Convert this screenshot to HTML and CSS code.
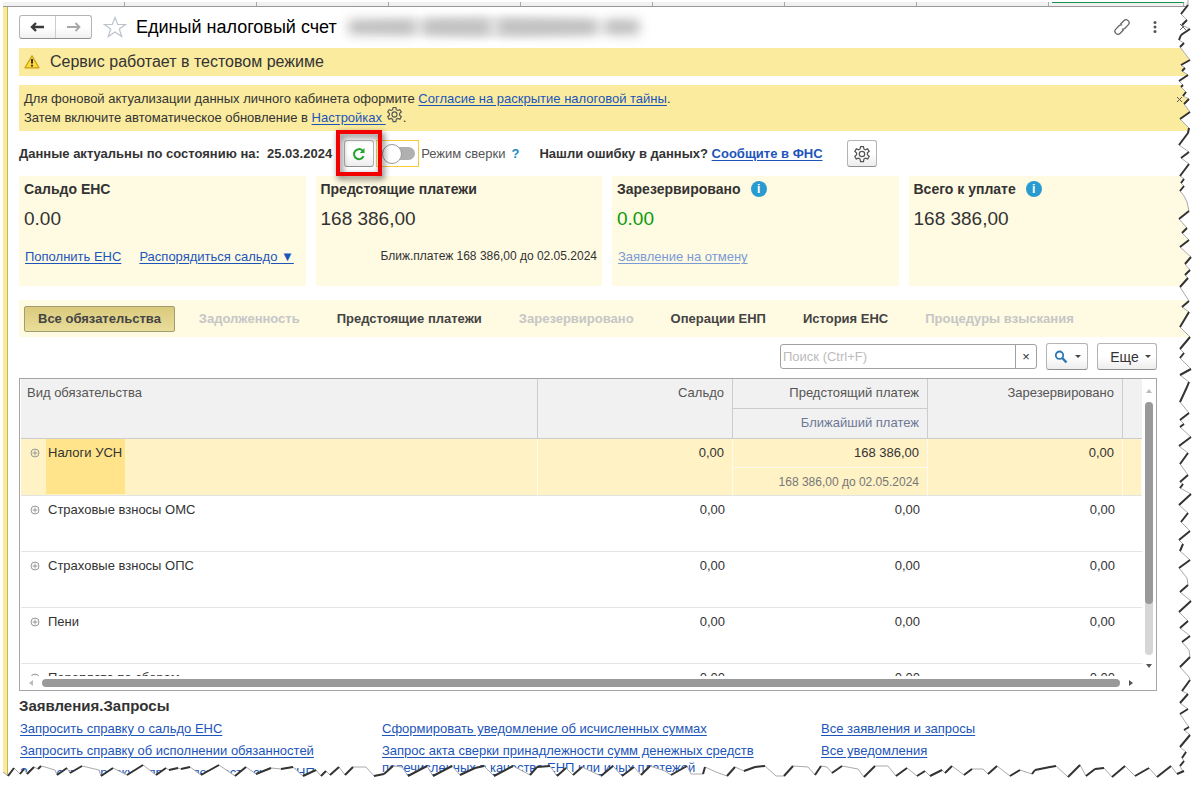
FILE: index.html
```html
<!DOCTYPE html>
<html lang="ru">
<head>
<meta charset="utf-8">
<title>Единый налоговый счет</title>
<link rel="stylesheet" href="styles.css">
</head>
<body>
<svg class="defs" aria-hidden="true">
  <symbol id="gear" viewBox="0 0 16 16"><path d="M6.700 .8h2.600l.4 2.100 1.300.7 2-.8 1.400 2.200-1.600 1.400v1.600l1.600 1.500-1.300 2.300-2.100-.7-1.300.8-.4 2.200H6.700l-.4-2.200-1.300-.8-2.100.7-1.300-2.300L3.200 8V6.500L1.600 5 3 2.800l2 .8 1.300-.7z" transform="translate(0 .6)"/><circle cx="8" cy="8" r="2.400"/></symbol>
  <symbol id="expand" viewBox="0 0 10 10"><circle cx="5" cy="5" r="4"/><path d="M2.500 5h5M5 2.500v5"/></symbol>
</svg>
<div class="frame">
  <div class="tabstrip"><i></i><i></i><i></i><i></i><i></i><i></i><i></i><i></i><i class="current"></i></div>
  <main class="page">
    <header class="title-row">
      <div class="nav">
        <button type="button" aria-label="Назад"><svg width="16" height="12" viewBox="0 0 16 12"><path d="M2 6h12M6 2L2 6l4 4" fill="none" stroke="#3a3a3a" stroke-width="2.400"/></svg></button>
        <button type="button" aria-label="Вперед"><svg width="16" height="12" viewBox="0 0 16 12"><path d="M1 6h12M9.500 2l4 4-4 4" fill="none" stroke="#a8a8a8" stroke-width="1.800"/></svg></button>
      </div>
      <svg class="star" width="24" height="22" viewBox="0 0 24 22"><path d="M12 1.500l2.700 7h7.800l-6.200 4.500 2.400 7.500L12 16l-6.700 4.500L7.700 13 1.500 8.500h7.800z" fill="#fff" stroke="#bcc2ca" stroke-width="1.200"/></svg>
      <h1>Единый налоговый счет</h1>
      <div class="redacted" aria-hidden="true"><i></i><i></i><i></i><i></i></div>
      <div class="window-tools">
        <svg width="18" height="18" viewBox="0 0 18 18" fill="none" stroke="#666" stroke-width="1.300" stroke-linecap="round"><path d="M7.800 5.800l3-3.100a3 3 0 0 1 4.400 4.200l-3.200 3.300a3 3 0 0 1-2.600.9M10.200 12.200l-3 3.100a3 3 0 0 1-4.400-4.200L6 7.800a3 3 0 0 1 2.600-.9"/></svg>
        <svg width="4" height="14" viewBox="0 0 4 14" fill="#555"><circle cx="2" cy="2.500" r="1.500"/><circle cx="2" cy="7" r="1.500"/><circle cx="2" cy="11.500" r="1.500"/></svg>
        <svg width="8" height="8" viewBox="0 0 8 8" stroke="#666"><path d="M1 1l6 6M7 1L1 7"/></svg>
      </div>
    </header>

    <div class="banner test-mode">
      <svg width="16" height="14" viewBox="0 0 16 14"><path d="M8 .8L15 12.800H1z" fill="#ffd83b" stroke="#c99d10" stroke-width="1.200" stroke-linejoin="round"/><path d="M8 4v4.500M8 9.800v1.700" stroke="#222" stroke-width="1.800"/></svg>
      <span>Сервис работает в тестовом режиме</span>
    </div>

    <div class="banner notice">
      <p>Для фоновой актуализации данных личного кабинета оформите <a href="#consent">Согласие на раскрытие налоговой тайны</a>.<br>
      Затем включите автоматическое обновление в <a href="#settings">Настройках </a><svg class="gear" width="17" height="17"><use href="#gear"/></svg>.</p>
      <svg class="close" width="8" height="8" viewBox="0 0 8 8" stroke="#555"><path d="M1 1l5 5M6 1L1 6"/></svg>
    </div>

    <div class="status">
      <b>Данные актуальны по состоянию на:&nbsp; 25.03.2024</b>
      <div class="refresh">
        <button type="button" class="btn" aria-label="Обновить"><svg width="16" height="16" viewBox="0 0 16 16"><path d="M12.600 10.200A5 5 0 1 1 11.500 4.500" fill="none" stroke="#25a22b" stroke-width="2"/><path d="M13.500 2v5H8.700z" fill="#25a22b"/></svg></button>
        <span class="marker"></span>
      </div>
      <label class="reconcile"><span class="focus"><input type="checkbox"></span>Режим сверки</label>
      <a class="help" href="#help">?</a>
      <b class="error">Нашли ошибку в данных? <a href="#fns">Сообщите в ФНС</a></b>
      <button type="button" class="btn" aria-label="Настройки"><svg class="gear" width="18" height="18"><use href="#gear"/></svg></button>
    </div>

    <section class="cards">
      <article class="card">
        <h2>Сальдо ЕНС</h2><p class="sum">0.00</p>
        <p class="actions"><a href="#pay">Пополнить ЕНС</a><a href="#manage">Распорядиться сальдо ▼</a></p>
      </article>
      <article class="card">
        <h2>Предстоящие платежи</h2><p class="sum">168 386,00</p>
        <p class="next">Ближ.платеж 168 386,00 до 02.05.2024</p>
      </article>
      <article class="card">
        <h2>Зарезервировано <span class="info">i</span></h2><p class="sum green">0.00</p>
        <p class="actions"><a class="pale" href="#cancel">Заявление на отмену</a></p>
      </article>
      <article class="card">
        <h2>Всего к уплате <span class="info">i</span></h2><p class="sum">168 386,00</p>
      </article>
    </section>

    <nav class="tabs">
      <button type="button" class="active">Все обязательства</button>
      <button type="button" disabled>Задолженность</button>
      <button type="button">Предстоящие платежи</button>
      <button type="button" disabled>Зарезервировано</button>
      <button type="button">Операции ЕНП</button>
      <button type="button">История ЕНС</button>
      <button type="button" disabled>Процедуры взыскания</button>
    </nav>

    <div class="tools">
      <div class="search"><input type="text" aria-label="Поиск" placeholder="Поиск (Ctrl+F)"><button type="button" aria-label="Очистить">×</button></div>
      <button type="button" class="btn find" aria-label="Найти"><svg width="14" height="14" viewBox="0 0 14 14" fill="none" stroke="#2b78b5"><circle cx="5.500" cy="5.200" r="3.700" stroke-width="1.800"/><path d="M8.300 8l4.200 4.500" stroke-width="2.400"/></svg><span class="caret"></span></button>
      <button type="button" class="btn more">Еще<span class="caret"></span></button>
    </div>

    <div class="grid">
      <div class="viewport">
        <table>
          <colgroup><col><col class="num"><col class="num"><col class="num"><col class="tail"></colgroup>
          <thead>
            <tr><th rowspan="2">Вид обязательства</th><th rowspan="2">Сальдо</th><th>Предстоящий платеж</th><th rowspan="2">Зарезервировано</th><th rowspan="2"></th></tr>
            <tr><th class="sub">Ближайший платеж</th></tr>
          </thead>
          <tbody>
            <tr class="selected"><td><div class="name"><svg class="plus"><use href="#expand"/></svg><span>Налоги УСН</span></div></td><td>0,00</td><td class="split"><div>168 386,00</div><div class="sub">168 386,00 до 02.05.2024</div></td><td>0,00</td><td></td></tr>
            <tr><td><div class="name"><svg class="plus"><use href="#expand"/></svg><span>Страховые взносы ОМС</span></div></td><td>0,00</td><td>0,00</td><td>0,00</td><td></td></tr>
            <tr><td><div class="name"><svg class="plus"><use href="#expand"/></svg><span>Страховые взносы ОПС</span></div></td><td>0,00</td><td>0,00</td><td>0,00</td><td></td></tr>
            <tr><td><div class="name"><svg class="plus"><use href="#expand"/></svg><span>Пени</span></div></td><td>0,00</td><td>0,00</td><td>0,00</td><td></td></tr>
            <tr><td><div class="name"><svg class="plus"><use href="#expand"/></svg><span>Переплата по сборам</span></div></td><td>0,00</td><td>0,00</td><td>0,00</td><td></td></tr>
          </tbody>
        </table>
      </div>
      <div class="vbar"><span class="arrow up"></span><div class="track"><div class="thumb"></div></div><span class="arrow down"></span></div>
      <div class="hbar"><span class="arrow left"></span><div class="thumb"></div><span class="arrow right"></span></div>
    </div>

    <section class="requests">
      <h2>Заявления.Запросы</h2>
      <div class="columns">
        <div><a href="#r1">Запросить справку о сальдо ЕНС</a><a href="#r2">Запросить справку об исполнении обязанностей</a><a href="#r3">Запросить справку о принадлежности сумм ЕНП</a></div>
        <div><a href="#r4">Сформировать уведомление об исчисленных суммах</a><a href="#r5">Запрос акта сверки принадлежности сумм денежных средств<br>перечисленных в качестве ЕНП или иных платежей</a></div>
        <div><a href="#r6">Все заявления и запросы</a><a href="#r7">Все уведомления</a></div>
      </div>
    </section>
  </main>
  <svg class="torn right-edge" id="torn-right" aria-hidden="true"></svg>
  <svg class="torn bottom-edge" id="torn-bottom" aria-hidden="true"></svg>
</div>
<script src="torn.js"></script>
</body>
</html>
```

FILE: torn.js
```js
// Torn paper edges: points run along the tear, steep backward strokes are dark.
const right = [[10,0],[10,5],[3,14],[9,20],[4,25],[12,29],[3,35],[1,40],[6,43],[2,47],[12,60],[3,65],[7,68],[4,71],[10,75],[1,81],[5,85],[3,87],[8,92],[5,96],[11,99],[6,104],[12,112],[2,119],[11,128],[10,133],[1,145],[11,152],[3,158],[11,164],[2,176],[6,179],[3,183],[6,186],[2,191],[6,196],[9,202],[11,211],[1,219],[9,228],[4,233],[11,240],[2,247],[13,257],[7,264],[12,270],[7,275],[10,278],[2,287],[11,301],[4,307],[11,312],[2,327],[12,337],[2,349],[6,353],[2,358],[13,369],[2,375],[11,382],[9,387],[2,402],[11,413],[2,420],[6,424],[2,427],[13,437],[1,446],[10,453],[2,464],[10,475],[2,482],[5,484],[2,488],[13,494],[1,505],[10,513],[3,522],[12,531],[1,540],[5,544],[2,551],[12,560],[1,568],[9,578],[10,585],[2,592],[13,601],[1,612],[10,621],[2,628],[12,636],[4,642],[11,650],[12,657],[2,667],[11,677],[12,680],[4,691],[10,694],[2,703],[10,709],[2,714],[8,723],[11,727],[6,730],[12,735],[2,747],[8,752],[4,758],[6,761],[2,766],[6,774]];
const bottom = [[3,8],[8,12],[14,4],[20,10],[24,5],[27,10],[34,3],[38,5],[41,2],[45,3],[55,6],[57,11],[67,4],[70,9],[82,2],[99,6],[101,12],[113,4],[127,11],[143,1],[156,11],[166,4],[169,6],[178,4],[181,5],[190,3],[201,11],[219,1],[235,12],[246,3],[256,10],[271,4],[281,5],[293,3],[303,12],[316,6],[321,12],[326,7],[330,11],[339,3],[345,11],[353,3],[366,3],[374,12],[384,10],[393,2],[402,3],[408,12],[427,2],[433,12],[452,2],[460,11],[475,4],[484,2],[494,12],[513,2],[530,11],[537,3],[550,2],[557,12],[566,4],[573,11],[582,3],[601,12],[613,2],[622,12],[634,3],[641,11],[650,2],[665,7],[671,11],[687,2],[691,10],[703,10],[705,3],[716,8],[727,12],[735,3],[744,7],[755,3],[765,2],[776,12],[784,12],[793,2],[808,3],[815,11],[821,2],[827,3],[832,9],[842,2],[858,5],[864,13],[875,2],[888,2],[896,12],[907,4],[917,12],[925,7],[930,12],[942,6],[945,9],[952,2],[964,11],[972,5],[983,5],[988,10],[997,2],[1010,12],[1020,6],[1032,10],[1035,6],[1050,3],[1056,2],[1068,13],[1080,1],[1086,12],[1095,5],[1104,4],[1112,13],[1125,2],[1135,12],[1149,4],[1157,13],[1171,2],[1177,10],[1184,7]];

function tear(id, pts, outside, isDark) {
  const line = 'M' + pts.map(p => p.join(' ')).join('L');
  let dark = '';
  for (let i = 1; i < pts.length; i++) {
    if (isDark(pts[i - 1], pts[i])) dark += `M${pts[i - 1].join(' ')}L${pts[i].join(' ')}`;
  }
  document.getElementById(id).innerHTML =
    `<path class="outside" d="${line}${outside}"/><path class="thin" d="${line}"/><path class="thick" d="${dark}"/>`;
}
tear('torn-right', right, 'V786H22V0Z', (a, b) => b[0] < a[0]);
tear('torn-bottom', bottom, 'H1200V22H0V8Z', (a, b) => b[1] < a[1]);
```

FILE: styles.css
```css
* { box-sizing: border-box; }
body { margin: 0; background: #fff; color: #333; font: 13px/18px "Liberation Sans", Arial, sans-serif; }
h1, h2, p { margin: 0; font-weight: normal; }
button, input { font: inherit; color: inherit; margin: 0; }
a { color: #1c55ba; text-underline-offset: 2px; }
svg { flex: none; }
.defs { position: absolute; width: 0; height: 0; }
.gear { fill: none; stroke: #555; stroke-width: 1.1; }

.frame { position: relative; min-height: 100vh; overflow: hidden; padding: 2px 0 0 3px; }
.tabstrip { display: flex; height: 5px; margin-right: 12px; background: #f1f1f1; border-bottom: 1px solid #999; }
.tabstrip i { flex: 0 1 132px; border-right: 1px solid #aaa; }
.tabstrip i:first-child { flex-basis: 122px; }
.tabstrip .current { border-top: 1px solid #12924f; margin-left: 3px; }
.page { border-left: 4px solid #fae99a; box-shadow: inset 1px 0 #c5b55d; padding: 8px 5px 0 12px; min-height: 768px; }

.title-row { display: flex; align-items: center; height: 24px; }
.nav { display: flex; width: 73px; height: 24px; border: 1px solid #b4b4b4; border-bottom-color: #8f8f8f; border-radius: 3px; background: linear-gradient(#fff 50%, #f0f0f0); }
.nav button { flex: 1; padding: 0; border: 0; background: none; display: flex; align-items: center; justify-content: center; }
.nav button + button { border-left: 1px solid #ccc; }
.star { margin: 0 9px 0 11px; }
h1 { font-size: 18px; line-height: 24px; color: #000; }
.redacted { display: flex; gap: 8px; align-items: center; width: 306px; height: 30px; margin-left: 4px; padding: 0 8px; background: radial-gradient(closest-side, #eee 50%, #fff); }
.redacted i { flex: 4; height: 14px; background: #b8b8b8; filter: blur(6px); }
.redacted i:nth-child(3) { flex: 6; }
.redacted i:nth-child(4) { flex: 2; }
.window-tools { display: flex; align-items: center; gap: 22px; margin-left: auto; padding-right: 8px; }

.banner { display: flex; background: #faeb9e; }
.test-mode { align-items: center; gap: 10px; height: 28px; margin-top: 9px; padding-left: 5px; font-size: 16px; }
.notice { justify-content: space-between; margin-top: 9px; padding: 4px 11px 4px 5px; min-height: 46px; line-height: 19px; }
.notice .gear { vertical-align: -1px; margin-top: -4px; }
.notice .close { margin-top: 7px; }

.status { display: flex; align-items: center; height: 45px; white-space: nowrap; }
.btn { display: flex; align-items: center; justify-content: center; height: 27px; width: 30px; padding: 0; border: 1px solid #b4b4b4; border-bottom-color: #8f8f8f; border-radius: 3px; background: linear-gradient(#fff 50%, #ededed); }
.refresh { position: relative; margin: 0 2px 0 12px; }
.marker { position: absolute; inset: -10px -8px -9px; border: 4px solid #f30000; filter: drop-shadow(2px 3px 3px #0009); z-index: 2; }
.reconcile { display: flex; align-items: center; gap: 2px; color: #555; }
.focus { display: flex; align-items: center; width: 43px; height: 27px; padding-left: 5px; border: 1px solid #f6cc3b; }
.focus input { appearance: none; width: 33px; height: 13px; border-radius: 7px; background: #b0b0b0; display: flex; align-items: center; }
.focus input::before { content: ""; flex: none; width: 18px; height: 18px; border: 1px solid #999; border-radius: 50%; background: #fff; }
.help { margin-left: 6px; font-weight: bold; color: #1e88c7; text-decoration: none; }
.error { margin: 0 24px 0 20px; }

.cards { display: grid; grid-template-columns: repeat(4, 1fr); gap: 10px; }
.card { min-height: 110px; padding: 4px 5px; background: #fffae2; }
.card h2 { display: flex; align-items: center; gap: 10px; font-size: 14px; line-height: 18px; font-weight: bold; }
.sum { margin-top: 9px; font-size: 19px; line-height: 24px; }
.green { color: #0b9a0b; }
.actions { display: flex; gap: 18px; margin-top: 17px; padding-left: 1px; white-space: nowrap; }
.next { margin-top: 16px; text-align: right; font-size: 12px; }
.pale { color: #7a9bd8; }
.info { width: 16px; height: 16px; border-radius: 50%; background: #2a9bd0; color: #fff; font-size: 12px; line-height: 16px; text-align: center; }

.tabs { display: flex; align-items: center; gap: 11px; height: 37px; margin-top: 14px; padding-left: 5px; background: #fffae2; white-space: nowrap; }
.tabs button { height: 26px; padding: 0 12px; border: 1px solid transparent; border-radius: 2px; background: none; font-weight: bold; color: #444; }
.tabs button:disabled { color: #c6c6c6; }
.tabs .active { padding: 0 13px; border-color: #a39b72; background: linear-gradient(#d9ca7c, #eadd9b); }

.tools { display: flex; justify-content: flex-end; align-items: center; gap: 9px; height: 41px; margin-right: 38px; padding-bottom: 2px; }
.search { display: flex; width: 257px; height: 25px; border: 1px solid #a0a0a0; border-radius: 3px; }
.search input { flex: 1; min-width: 0; padding: 0 2px; border: 0; background: none; }
.search input::placeholder { color: #bbb; }
.search button { width: 21px; padding: 0; border: 0; border-left: 1px solid #a0a0a0; background: none; }
.find { width: 42px; gap: 7px; }
.more { width: 60px; gap: 6px; padding-left: 7px; font-size: 14px; }
.caret { border: 3px solid transparent; border-top-color: #444; border-bottom: 0; }

.grid { display: grid; grid-template: 297px 14px / 1fr 14px; margin-right: 38px; border: 1px solid #a5a5a5; }
.viewport { overflow: hidden; padding-left: 1px; }
table { width: 100%; table-layout: fixed; border-collapse: separate; border-spacing: 0; }
.num { width: 195px; }
.tail { width: 19px; }
th, td { padding: 5px 8px; text-align: right; vertical-align: top; font-weight: normal; line-height: 18px; }
th { height: 30px; background: #f1f1f1; border-right: 1px solid #ccc; border-bottom: 1px solid #ccc; color: #555; }
th:first-child:not(.sub) { text-align: left; padding-left: 6px; }
th:last-child:not(.sub) { border-right: 0; }
td { height: 56px; border-bottom: 1px solid #e4e4e4; }
td:first-child { padding: 0 0 0 9px; }
.name { display: flex; height: 55px; }
.name span { padding: 5px 3px 0 2px; }
.plus { width: 10px; height: 10px; margin: 9px 6px 0 0; fill: none; stroke: #999; }
.selected td { background: #fff2c5; border-right: 1px solid #fffaf0; }
.selected .name span { background: #ffe48c; }
td.split { padding: 0; }
.split div { padding: 5px 8px; height: 28px; }
.split .sub { border-top: 1px solid #fffaf0; }
.sub { color: #6c7896; }
.split .sub { color: #777; font-size: 12px; }
.arrow { width: 0; height: 0; border: 3px solid transparent; }
.up { border-bottom: 4px solid #bbb; border-top: 0; }
.down { border-top: 4px solid #555; border-bottom: 0; }
.left { border-right: 4px solid #bbb; border-left: 0; }
.right { border-left: 4px solid #555; border-right: 0; }
.vbar { display: flex; flex-direction: column; align-items: center; gap: 9px; padding: 10px 0 8px; }
.track { flex: 1; width: 8px; border-radius: 4px; background: #d6d6d6; }
.vbar .thumb { height: 80%; border-radius: 4px; background: #999; }
.hbar { display: flex; align-items: center; gap: 9px; padding: 0 9px; }
.hbar .thumb { flex: 1; height: 8px; border-radius: 4px; background: #999; }

.requests h2 { margin-top: 5px; font-size: 15px; line-height: 20px; font-weight: bold; }
.columns { display: grid; grid-template-columns: 362px 439px 1fr; margin-top: 4px; padding-left: 1px; height: 62px; white-space: nowrap; }
.columns a { display: block; margin-bottom: 5px; }
.columns div { line-height: 17px; }

.torn { position: absolute; z-index: 3; pointer-events: none; }
.right-edge { top: 0; right: 0; width: 22px; height: 786px; }
.bottom-edge { left: 0; bottom: 0; width: 100%; height: 22px; }
.outside { fill: #fff; }
.thin { fill: none; stroke: #aaa; stroke-width: 1; }
.thick { fill: none; stroke: #333; stroke-width: 2; }
```
